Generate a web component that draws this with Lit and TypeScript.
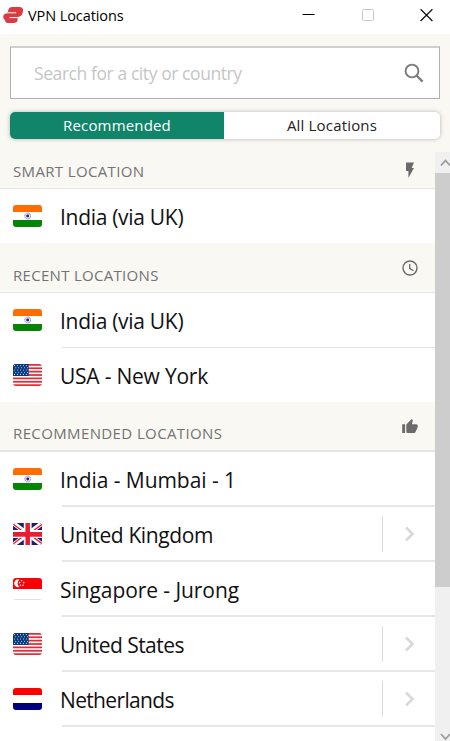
import { LitElement, html, css, svg, nothing } from "lit";
import { customElement } from "lit/decorators.js";
import { classMap } from "lit/directives/class-map.js";

type Country = "in" | "us" | "gb" | "sg" | "nl";
interface Place { name: string; flag: Country; expandable?: boolean; spacing: number }
interface Section { title: string; icon: "bolt" | "clock" | "thumb"; kind: string; spacing: number; places: Place[] }

const sections: Section[] = [
  { title: "SMART LOCATION", icon: "bolt", kind: "smart", spacing: 0.35, places: [{ name: "India (via UK)", flag: "in", spacing: -0.3 }] },
  {
    title: "RECENT LOCATIONS", icon: "clock", kind: "recent", spacing: 0.3, places: [
      { name: "India (via UK)", flag: "in", spacing: -0.3 },
      { name: "USA - New York", flag: "us", spacing: -0.22 },
    ],
  },
  {
    title: "RECOMMENDED LOCATIONS", icon: "thumb", kind: "recommended", spacing: 0.38, places: [
      { name: "India - Mumbai - 1", flag: "in", spacing: -0.05 },
      { name: "United Kingdom", flag: "gb", expandable: true, spacing: -0.38 },
      { name: "Singapore - Jurong", flag: "sg", spacing: -0.07 },
      { name: "United States", flag: "us", expandable: true, spacing: -0.55 },
      { name: "Netherlands", flag: "nl", expandable: true, spacing: -0.65 },
    ],
  },
];

const rows = [0, 1, 2, 3, 4, 5, 6];
const flags = {
  in: svg`<rect width="30" height="22" fill="#fff"/><rect width="30" height="7" fill="#ff6c00"/><rect y="15" width="30" height="7" fill="#078307"/>
    <circle cx="15" cy="11" r="3" fill="#e4e4f6" stroke="#7777b5" stroke-width=".9" stroke-dasharray="1.2 .6"/><circle cx="15" cy="11" r="1.4" fill="#202080"/>`,
  us: svg`<rect width="30" height="22" fill="#fff"/>${rows.map((i) => svg`<rect y=${i * 3.38} width="30" height="1.75" fill="#e02c38"/>`)}
    <rect width="16" height="12" fill="#093a7d"/>${[0, 1, 2, 3, 4].map((r) => [0, 1, 2, 3, 4].map((c) => svg`<circle cx=${1.6 + c * 3 + (r % 2) * 1.2} cy=${1.6 + r * 2.2} r=".55" fill="#d4e2f4"/>`))}`,
  gb: svg`<rect width="30" height="22" fill="#1b1e68"/><path d="M0 0L30 22M30 0L0 22" stroke="#fff" stroke-width="4.6"/>
    <path d="M0 1L13 10.5M30 1L18 9.7M0 21L12 12.2M30 21L17 11.5" stroke="#ed1b30" stroke-width="1.4"/>
    <path d="M15 0V22M0 11H30" stroke="#fff" stroke-width="8"/><path d="M15 0V22M0 11.4H30" stroke="#ed1b30" stroke-width="4.6"/>`,
  sg: svg`<rect width="30" height="22" fill="#fff"/><rect width="30" height="11" fill="#fb0007"/><path d="M6.6 1.5A4 4 0 1 0 6.6 9A4.6 4.6 0 0 1 6.6 1.5Z" fill="#fff"/>
    <g fill="#fff"><circle cx="8.8" cy="2.7" r=".8"/><circle cx="6.7" cy="4.6" r=".8"/><circle cx="11" cy="4.6" r=".8"/><circle cx="7.6" cy="7.2" r=".8"/><circle cx="10.2" cy="7.2" r=".8"/></g><path d="M0 21.6H30" stroke="#d5d5d5" stroke-width=".8"/>`,
  nl: svg`<rect width="30" height="22" fill="#fff"/><rect width="30" height="7" fill="#ff0000"/><rect y="15" width="30" height="7" fill="#00007f"/>`,
};

const sectionIcons = {
  bolt: svg`<path d="M4 0.6H12L9.7 6H12L6.4 16V9H4Z" fill="#6b6b6b"/>`,
  clock: svg`<circle cx="8" cy="8" r="7" fill="none" stroke="#6b6b6b" stroke-width="1.4"/><path d="M7.7 4V8.4L11.4 10.7" fill="none" stroke="#6b6b6b" stroke-width="1.3"/>`,
  thumb: svg`<path d="M0.2 6.3H3.1V15H0.2ZM4.3 7.2Q4.3 6.5 4.8 6L9.7 1L10.5 1.8Q10.8 2.2 10.7 2.7L10 6.2H14.3Q15.8 6.2 15.8 7.7V9L13.5 14.1Q13.1 15 12.1 15H5.8Q4.3 15 4.3 13.5Z" fill="#6b6b6b"/>`,
};

@customElement("app-root")
export class AppRoot extends LitElement {
  static styles = css`
    :host { display: flex; flex-direction: column; width: 450px; height: 741px; overflow: hidden; background: #f9f8f3; font-family: "Open Sans", "Noto Sans", sans-serif; color: #111; }
    * { box-sizing: border-box; }
    svg { display: block; flex: none; }
    .titlebar { display: flex; height: 34px; flex: none; background: #fff; padding: 0 17px 0 3px; }
    .logo { margin-top: 6px; }
    .caption { margin: 5px 0 0 5px; font-size: 14.5px; line-height: 22px; letter-spacing: -0.08px; color: #000; white-space: nowrap; }
    .controls { display: flex; margin: 8px 0 0 auto; gap: 46.5px; }
    .search { display: flex; align-items: center; justify-content: space-between; flex: none; height: 53px; margin: 12px 10px 0; padding: 0 15px 0 23px; background: #fff; border: 1px solid #b0b0b8; border-top: 2px solid #cdd0cd; }
    .placeholder { font-size: 17.5px; letter-spacing: -0.42px; color: #c6c6c6; white-space: nowrap; }
    .tabs { display: flex; flex: none; height: 27px; margin: 13px 10px; border-radius: 5px; background: #fff; box-shadow: 0 0 4px rgba(0,0,0,.28); }
    .tab { flex: 1; text-align: center; font-size: 15px; line-height: 26px; letter-spacing: 0.17px; color: #222; }
    .tab.active { flex: 0 0 214px; border-radius: 5px 0 0 5px; background: #11856a; color: #fff; }
    .body { display: flex; flex: 1; min-height: 0; }
    .list { width: 435px; background: #fff; overflow: hidden; }
    .head { display: flex; justify-content: space-between; align-items: flex-start; height: 50px; padding: 17px 17px 0 13px; background: #f9f8f3; border-bottom: 1px solid #e6e6e6; }
    .head.smart { height: 37px; padding-top: 10px; }
    .head.recommended { border-bottom-width: 2px; padding-top: 16px; }
    .title { font-size: 15px; line-height: 18px; color: #737373; white-space: nowrap; margin-top: 6px; }
    .smart .title { margin-top: 0; }
    .row { display: flex; height: 55px; padding-left: 13px; }
    .row.single { height: 54px; }
    .flag { width: 29.4px; height: 22px; margin-top: 16px; border-radius: 3px; }
    .info { display: flex; justify-content: space-between; flex: 1; margin-left: 19.6px; border-bottom: 1px solid #e5e5e5; }
    .thick .info { border-bottom: 2px solid #e7e7e7; }
    .last .info { border-bottom: 0; }
    .name { margin: 12px 0 0 -2px; font-size: 21px; line-height: 32px; color: #111; white-space: nowrap; }
    .more { display: flex; width: 53px; height: 36px; margin-top: 9px; border-left: 1px solid #dcdcdc; padding: 10px 0 0 21px; }
    .scroll { display: flex; flex-direction: column; width: 15px; background: #f0f0f0; }
    .thumb { height: 414px; background: #cdcdcd; }
    .down { margin-top: auto; }
  `;

  private row(p: Place, last: boolean, thick: boolean) {
    return html`<div class=${classMap({ row: true, last, thick, single: last })}>
      <svg class="flag" viewBox="0 0 30 22" preserveAspectRatio="none">${flags[p.flag]}</svg>
      <div class="info"><span class="name" style="letter-spacing:${p.spacing}px">${p.name}</span>
        ${p.expandable ? html`<div class="more"><svg width="11" height="16" viewBox="0 0 11 16"><path d="M2 1.5L8.5 8L2 14.5" fill="none" stroke="#d9d9d9" stroke-width="2.7"/></svg></div>` : nothing}
      </div></div>`;
  }

  render() {
    return html`
      <div class="titlebar">
        <svg class="logo" width="20" height="18" viewBox="0 0 20 18"><path d="M8.5 1H17Q20.5 1.3 20 5Q19.7 9.6 16 10.8H15.3Q15.6 12 14.4 12.6Q15 14 14.3 15.3Q13.5 17 11 17H5Q2 16.7 2 13.9Q0.2 13.3 0.2 11Q0.3 7.8 3.4 7.6H4.6Q4.2 6.5 5 6Q5.2 1.3 8.5 1Z" fill="#dc3b42"/><path d="M4.8 6.8H13.2M6.5 11.6H15.5" stroke="#fff" stroke-width="1"/></svg>
        <span class="caption">VPN Locations</span>
        <div class="controls">
          <svg width="13" height="14" viewBox="0 0 13 14"><path d="M0.5 6.5H12.5" stroke="#000"/></svg>
          <svg width="12" height="14" viewBox="0 0 12 14"><rect x=".5" y="1.5" width="11" height="11" rx="1" fill="none" stroke="#c9c9c9"/></svg>
          <svg width="13" height="14" viewBox="0 0 13 14"><path d="M.6 1.3L12.4 13M12.4 1.3L.6 13" stroke="#111" stroke-width="1.25"/></svg>
        </div>
      </div>
      <div class="search"><span class="placeholder">Search for a city or country</span>
        <svg width="20" height="20" viewBox="0 0 20 20"><circle cx="8" cy="8" r="6.4" fill="none" stroke="#7c7c7c" stroke-width="1.9"/><path d="M12.3 12.3L18.6 18.6" stroke="#7c7c7c" stroke-width="2.3"/></svg>
      </div>
      <div class="tabs"><div class="tab active">Recommended</div><div class="tab">All Locations</div></div>
      <div class="body">
        <div class="list">${sections.map((s) => html`
          <div class="head ${s.kind}"><span class="title" style="letter-spacing:${s.spacing}px">${s.title}</span>
            <svg width="16" height="16" viewBox="0 0 16 16">${sectionIcons[s.icon]}</svg></div>
          ${s.places.map((p, i) => this.row(p, i === s.places.length - 1 && s.kind !== "recommended", s.kind === "recommended"))}`)}
        </div>
        <div class="scroll">
          <svg width="15" height="21" viewBox="0 0 15 21"><path d="M6 13.5L10.5 8.5L15 13.5" fill="none" stroke="#999" stroke-width="1.7"/></svg>
          <div class="thumb"></div>
          <svg class="down" width="15" height="16" viewBox="0 0 15 16"><path d="M6 9L10.5 14L15 9" fill="none" stroke="#999" stroke-width="1.7"/></svg>
        </div>
      </div>`;
  }
}
